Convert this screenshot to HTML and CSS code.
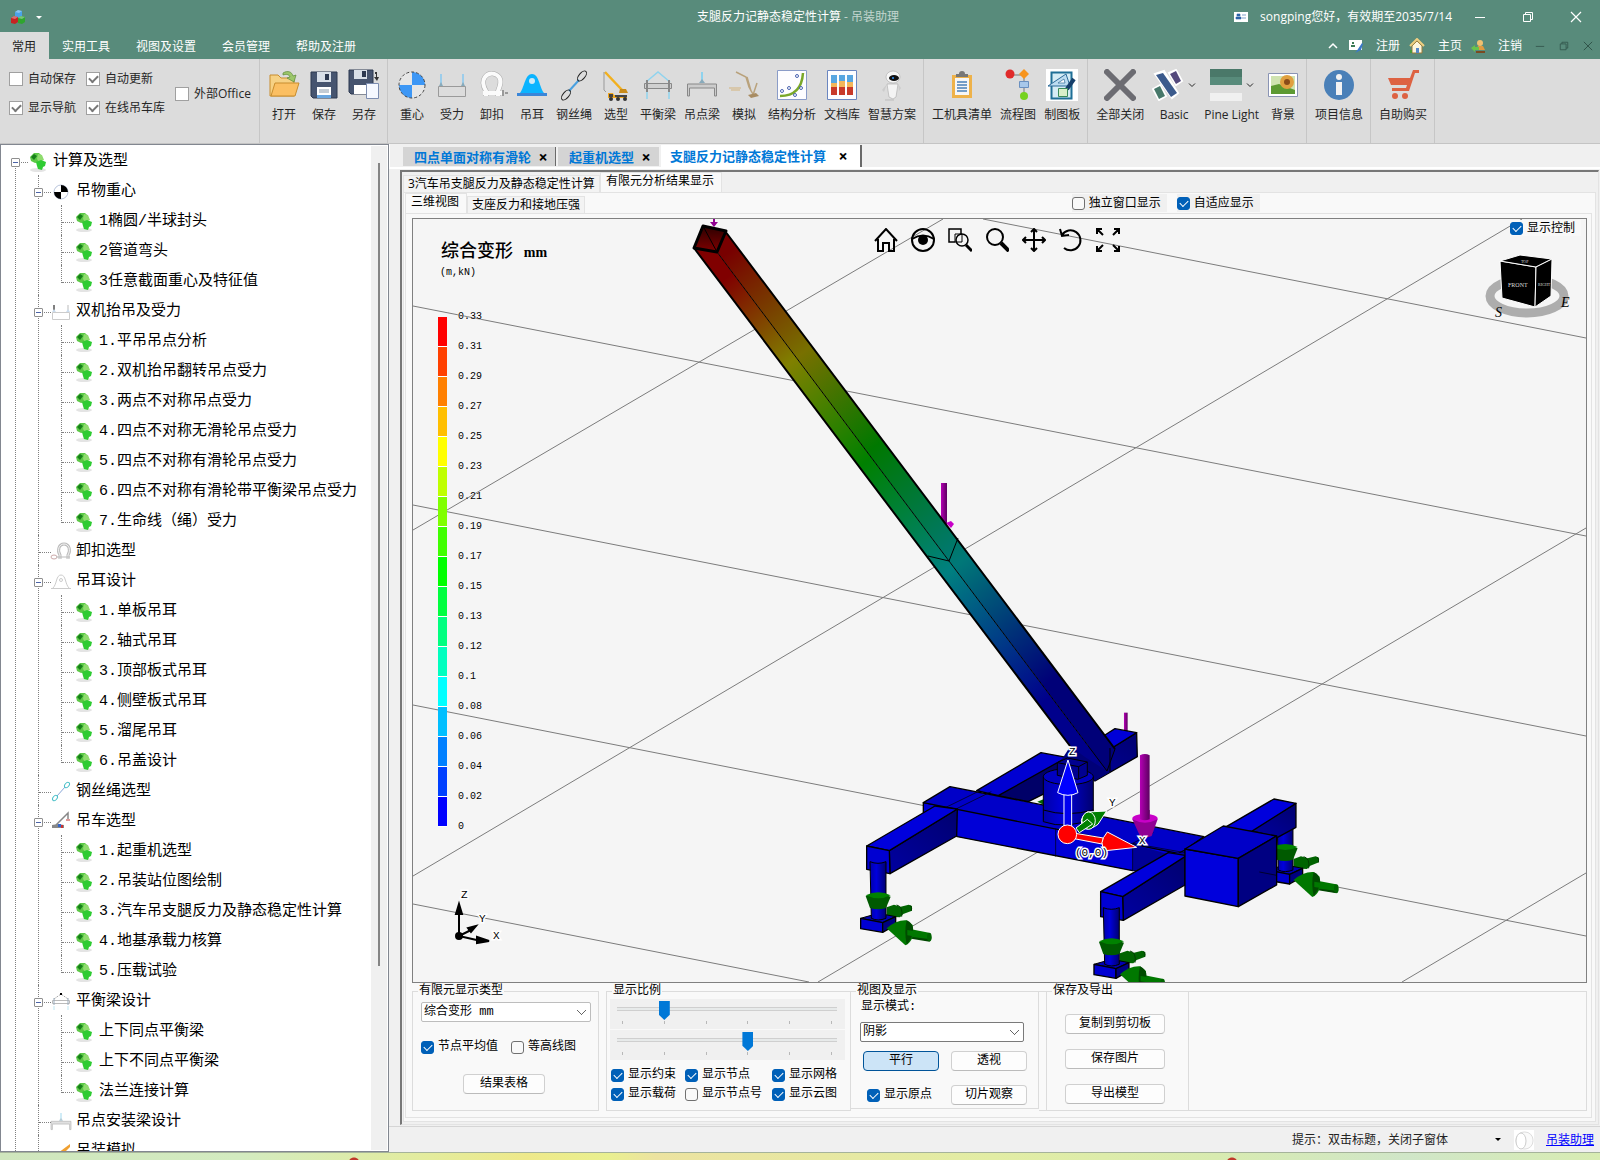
FILE: index.html
```html
<!DOCTYPE html>
<html lang="zh-CN">
<head>
    <meta charset="UTF-8">
    <title>支腿反力记静态稳定性计算 - 吊装助理</title>
    <link rel="stylesheet" href="styles.css">
</head>
<body>
    <!-- shared icons -->
    <svg class="defs" aria-hidden="true">
        <symbol id="leaf" viewBox="0 0 22 22">
            <ellipse cx="11" cy="19" rx="8" ry="2" fill="#e4e4e4"/>
            <path d="M3 6l4-4 5 0 3 3-2 6-5 1-4-2z" fill="#5cc846"/>
            <path d="M4 6l3-3 3 2-3 4z" fill="#17801a"/>
            <path d="M11 3l4 1 2 5-5 2-2-3z" fill="#8fdc6e"/>
            <path d="M9 11l5-2 5 2-1 4-2 1-1 3-4-1-1-3z" fill="#2fcb33"/>
        </symbol>
        <symbol id="beam" viewBox="0 0 32 32">
            <path d="M5 5v12M27 5v12" stroke="#86c8f0" stroke-width="1.5"/>
            <path d="M3 17l2-4 2 4zM25 17l2-4 2 4z" fill="#8ab"/>
            <path d="M2.500 17.500h27v10h-27z" fill="none" stroke="#9a9a9a"/>
        </symbol>
        <symbol id="shackle" viewBox="0 0 32 32">
            <path d="M10 27v-5c-3-5-4-10-1-14 4-5 11-4 14 0 3 4 1 9-1 14v5" fill="none" stroke="#aaa" stroke-width="5"/>
            <path d="M10 27v-5c-3-5-4-10-1-14 4-5 11-4 14 0 3 4 1 9-1 14v5M7 24h20" fill="none" stroke="#fbfbfb" stroke-width="4"/>
            <path d="M27 21v6M29 24h3" stroke="#999" stroke-width="2"/>
        </symbol>
        <symbol id="rope" viewBox="0 0 32 32">
            <path d="M11 22L21 11" stroke="#48a0e0" stroke-width="2"/>
            <ellipse cx="24" cy="7" rx="3" ry="6" transform="rotate(40 24 7)" fill="none" stroke="#222"/>
            <ellipse cx="8" cy="26" rx="3" ry="6" transform="rotate(40 8 26)" fill="none" stroke="#222"/>
        </symbol>
        <symbol id="spreader" viewBox="0 0 32 32">
            <path d="M4 13L16 3l12 10M5 21v9M27 21v9" fill="none" stroke="#8fd3ee" stroke-width="1.500"/>
            <path d="M2.500 14.500h27v5h-27z" fill="#d0d0d0" stroke="#888"/>
            <path d="M5 11v12M27 11v12" stroke="#888" stroke-width="2"/>
        </symbol>
        <symbol id="pointbeam" viewBox="0 0 32 32">
            <path d="M16 3v11" stroke="#8fd3ee" stroke-width="2"/>
            <path d="M13 14l3-4 3 4z" fill="#8ab"/>
            <path d="M1.500 27v-12h29v12h-2v-8h-25v8z" fill="#ccc" stroke="#888"/>
        </symbol>
        <symbol id="restore" viewBox="0 0 12 12">
            <path d="M1.500 3.500h7v7h-7zM3.500 3.500v-2h7v7h-2" fill="none" stroke="currentColor"/>
        </symbol>
        <symbol id="cross" viewBox="0 0 12 12">
            <path d="M1 1l10 10M11 1L1 11" stroke="currentColor" stroke-width="1.200"/>
        </symbol>
        <symbol id="dash" viewBox="0 0 12 12"><path d="M1 6.500h10" stroke="currentColor"/></symbol>
        <symbol id="down" viewBox="0 0 8 8"><path d="M1 2.500l3 3 3-3" fill="none" stroke="currentColor"/></symbol>
    </svg>

    <div class="app">
        <header class="titlebar">
            <div class="quick">
                <svg class="logo" viewBox="0 0 16 16">
                    <path d="M5 3l3-2 4 1v5l-3 2-4-1z" fill="#4aa3e8"/>
                    <path d="M1 9l3-2 4 1v5l-3 2-4-1z" fill="#c62222"/>
                    <path d="M8 9l3-2 4 1v5l-3 2-4-1z" fill="#2fa52f"/>
                    <path d="M5 3l3-2 4 1-3 2zM1 9l3-2 4 1-3 2zM8 9l3-2 4 1-3 2z" fill="#fff" opacity=".35"/>
                </svg>
                <span class="caret"></span>
            </div>
            <div class="title">支腿反力记静态稳定性计算 <span>- 吊装助理</span></div>
            <div class="account">
                <svg class="i14" viewBox="0 0 14 14"><path d="M0 2h14v10H0z" fill="#fff"/><path d="M2 9h5V7H2zM3 4h3v2H3zM8 5h4M8 8h4" fill="#2b63a8" stroke="#2b63a8" stroke-width=".6"/></svg>
                <span>songping您好，有效期至2035/7/14</span>
                <button class="win" aria-label="最小化"><svg><use href="#dash"/></svg></button>
                <button class="win" aria-label="还原"><svg><use href="#restore"/></svg></button>
                <button class="win" aria-label="关闭"><svg><use href="#cross"/></svg></button>
            </div>
        </header>

        <nav class="menubar">
            <a href="#" class="active">常用</a>
            <a href="#">实用工具</a>
            <a href="#">视图及设置</a>
            <a href="#">会员管理</a>
            <a href="#">帮助及注册</a>
            <div class="menu-right">
                <svg class="i10" viewBox="0 0 10 10"><path d="M1 7l4-4 4 4" fill="none" stroke="#fff" stroke-width="1.500"/></svg>
                <svg class="i14" viewBox="0 0 14 14"><path d="M0 1h13v10H0z" fill="#fff"/><path d="M2 8h4V6H2zM3 3h2v2H3z" fill="#3c7a55"/><path d="M13 4L7 13l-1 1 6-3 2-6z" fill="#3a78c8"/></svg>
                <a href="#">注册</a>
                <svg class="i16" viewBox="0 0 16 16"><path d="M3 8v7h10V8L8 3z" fill="#fdf6dc" stroke="#9a7a3a"/><path d="M1 8l7-7 7 7" fill="none" stroke="#f0cf80" stroke-width="2"/><path d="M7 10h3v5H7z" fill="#5588c8"/><path d="M1 12h2v3H1z" fill="#4a9a3a"/></svg>
                <a href="#">主页</a>
                <svg class="i14" viewBox="0 0 14 14"><circle cx="9" cy="4" r="3" fill="#f0c070"/><path d="M5 11h9l-2-4H7z" fill="#e09a40"/><path d="M5 12h9v2H5z" fill="#7a4a20"/><path d="M0 9l4-3v2h4v3H4v2z" fill="#6ac34a"/></svg>
                <a href="#">注销</a>
                <button class="mdi" aria-label="最小化"><svg><use href="#dash"/></svg></button>
                <button class="mdi" aria-label="还原"><svg><use href="#restore"/></svg></button>
                <button class="mdi" aria-label="关闭"><svg><use href="#cross"/></svg></button>
            </div>
        </nav>

        <div class="ribbon">
            <div class="options">
                <div class="opt-grid">
                    <label><input type="checkbox" class="flat">自动保存</label>
                    <label><input type="checkbox" class="flat" checked>自动更新</label>
                    <label><input type="checkbox" class="flat" checked>显示导航</label>
                    <label><input type="checkbox" class="flat" checked>在线吊车库</label>
                </div>
                <label><input type="checkbox" class="flat">外部Office</label>
            </div>

            <div class="group">
                <button class="tool">
                    <svg viewBox="0 0 32 32"><path d="M2 6h8l3 3h13v18H2z" fill="#f6d184" stroke="#c88d2e"/><path d="M7 14h24l-4 13H3z" fill="#fbbf62" stroke="#c88d2e"/><path d="M15 4c5-3 9-1 10 3l3-1-2 7-7-4 3-1c-1-3-4-3-7-2z" fill="#9cc66a" stroke="#5d8a3a" stroke-width=".7"/></svg>
                    打开
                </button>
                <button class="tool">
                    <svg viewBox="0 0 32 32"><path d="M3 3h26v26H5l-2-2z" fill="#46546f" stroke="#2c3850"/><path d="M9 3h14v10H9z" fill="#d8dfe8"/><path d="M17 5h4v6h-4z" fill="#2c3850"/><path d="M9 18h14v11H9z" fill="#fff"/><path d="M9 26h14v3H9z" fill="#6aa7e0"/><path d="M11 21h10M11 23h10" stroke="#89a"/></svg>
                    保存
                </button>
                <button class="tool">
                    <svg viewBox="0 0 32 32"><path d="M1 1h24v24H3l-2-2z" fill="#46546f" stroke="#2c3850"/><path d="M6 1h13v9H6z" fill="#d8dfe8"/><path d="M14 2h4v6h-4z" fill="#2c3850"/><path d="M6 16h13v9H6z" fill="#fff"/><path d="M18.500 14.500h12v15h-12z" fill="#f5f8ff" stroke="#7c8db0"/><path d="M27 3h2v5h2l-2 4-3-4h2V5h-1z" fill="#333"/></svg>
                    另存
                </button>
            </div>

            <div class="group">
                <button class="tool">
                    <svg viewBox="0 0 32 32"><circle cx="16" cy="16" r="13" fill="#e6e6e6"/><path d="M16 16V3a13 13 0 0 1 13 13zM16 16v13A13 13 0 0 1 3 16z" fill="#3d97f5"/><circle cx="16" cy="16" r="13" fill="none" stroke="#444" stroke-dasharray="3 2"/></svg>
                    重心
                </button>
                <button class="tool"><svg><use href="#beam"/></svg>受力</button>
                <button class="tool"><svg><use href="#shackle"/></svg>卸扣</button>
                <button class="tool">
                    <svg viewBox="0 0 32 32"><path d="M1 24h30v3H1z" fill="#3a86d8"/><path d="M4 24C9 17 9 5 16 5s7 12 12 19z" fill="#0bb4ff"/><circle cx="16" cy="12" r="3" fill="#cfeaf8"/></svg>
                    吊耳
                </button>
                <button class="tool"><svg><use href="#rope"/></svg>钢丝绳</button>
                <button class="tool">
                    <svg viewBox="0 0 32 32"><path d="M5 3l18 19" stroke="#f2b01e" stroke-width="2.500"/><path d="M4 3v18l2 2" fill="none" stroke="#999"/><path d="M8 24h5l1 2h13v3H8z" fill="#f2a81e"/><path d="M9 25h4v3H9zM15 26h12v2H15z" fill="#444"/><path d="M20 20h6l2 4h-9z" fill="#c98b1a"/><circle cx="11" cy="30" r="2" fill="#333"/><circle cx="18" cy="30" r="2" fill="#333"/><circle cx="25" cy="30" r="2" fill="#333"/></svg>
                    选型
                </button>
                <button class="tool"><svg><use href="#spreader"/></svg>平衡梁</button>
                <button class="tool"><svg><use href="#pointbeam"/></svg>吊点梁</button>
                <button class="tool">
                    <svg viewBox="0 0 32 32"><path d="M8 3l10 5 3 10 5 9M29 14l-4 12M19 8l4 14" fill="none" stroke="#b9a27c" stroke-width="1.500"/><path d="M1 19h12M3 21h9" stroke="#d3b37c"/><path d="M20 26l8-2 3 3-8 2z" fill="#a88c62"/></svg>
                    模拟
                </button>
                <button class="tool">
                    <svg viewBox="0 0 32 32"><path d="M1.500 1.500h29v29h-29z" fill="#fdfdff" stroke="#8a9cc8"/><path d="M4 27c14 0 22-8 23-23" fill="none" stroke="#7aa82a" stroke-width="2.500"/><g fill="none" stroke="#4a64b0"><circle cx="21" cy="7" r="1.500"/><circle cx="6" cy="22" r="1.500"/><circle cx="13" cy="19" r="1.500"/><circle cx="25" cy="19" r="1.500"/><circle cx="19" cy="26" r="1.500"/></g></svg>
                    结构分析
                </button>
                <button class="tool">
                    <svg viewBox="0 0 32 32"><path d="M1.500 1.500h29v29h-29z" fill="#fdfdff" stroke="#6a86c0"/><path d="M5 6h6v20H5zM13 6h6v20h-6zM21 6h6v20h-6z" fill="#c83a2a"/><path d="M5 6h6v8H5zM13 6h6v6h-6zM21 6h6v7h-6z" fill="#58a6e0"/><path d="M5 14h6v4H5zM13 12h6v6h-6zM21 13h6v5h-6z" fill="#f3b65a"/></svg>
                    文档库
                </button>
                <button class="tool">
                    <svg viewBox="0 0 32 32"><ellipse cx="17" cy="8" rx="7" ry="6" fill="#f6f6f6" stroke="#aaa" stroke-width=".6"/><ellipse cx="18" cy="9" rx="5" ry="3" fill="#111"/><circle cx="17" cy="9" r="1" fill="#39f"/><path d="M11 15h11l-2 13-3 2-4-2z" fill="#f4f4f4" stroke="#aaa" stroke-width=".6"/><path d="M11 15l-5 6 2 2zM22 15l3 4-2 3z" fill="#ccc"/><path d="M9 31h9" stroke="#bbb"/></svg>
                    智慧方案
                </button>
            </div>

            <div class="group">
                <button class="tool">
                    <svg viewBox="0 0 32 32"><path d="M6 6h20v23H6z" fill="#eeb24a"/><path d="M9 9h14v17H9z" fill="#f6f6f6"/><path d="M10 8V5h3a3 3 0 0 1 6 0h3v3z" fill="#777"/><path d="M11 13h10M11 16h10M11 19h10M11 22h10" stroke="#4a80b8" stroke-width="1.500"/></svg>
                    工机具清单
                </button>
                <button class="tool">
                    <svg viewBox="0 0 32 32"><path d="M7 6h14M22 8v20" stroke="#999" stroke-width="1.500"/><circle cx="8" cy="5" r="4.500" fill="#e02a2a"/><path d="M22 0l5 5-5 5-5-5z" fill="#f7941d"/><path d="M17.500 12.500h9v6h-9z" fill="#a8c8ea" stroke="#6a90c0"/><circle cx="22" cy="27" r="4" fill="#76d21f"/></svg>
                    流程图
                </button>
                <button class="tool">
                    <svg viewBox="0 0 32 32"><path d="M0 0h32v32H0z" fill="#fff"/><path d="M5.500 3.500h20v26h-20z" fill="#d5ecf5" stroke="#1f6f96" stroke-width="2"/><path d="M2 17L20 5l4 12z" fill="#bcdcf0" stroke="#2b6a98"/><path d="M12 14l6-4 1 4z" fill="#fff" stroke="#2b6a98" stroke-width=".7"/><path d="M21 20l7-10" stroke="#163f6a" stroke-width="4"/><path d="M12.500 19.500h9v8h-9z" fill="#d9efc9" stroke="#3a8a5a"/></svg>
                    制图板
                </button>
            </div>

            <div class="group">
                <button class="tool">
                    <svg viewBox="0 0 32 32"><path d="M3 3l26 26M29 3L3 29" stroke="#6c6c72" stroke-width="6" stroke-linecap="round"/></svg>
                    全部关闭
                </button>
                <button class="tool">
                    <span class="with-arrow">
                        <svg viewBox="0 0 32 32"><path d="M3 5l9-3 14 22-6 5zM1 20l7-4 6 11-7 4zM17 4l7-3 6 11-6 4z" fill="#fff" stroke="#fff" stroke-width="2"/><path d="M4 6l7-2 14 20-6 4z" fill="#3b5a8c"/><path d="M2 20l6-3 5 10-6 3z" fill="#47786a"/><path d="M18 5l6-3 5 10-5 3z" fill="#54497c"/></svg>
                        <svg class="arrow"><use href="#down"/></svg>
                    </span>
                    Basic
                </button>
                <button class="tool">
                    <span class="with-arrow">
                        <svg viewBox="0 0 32 32"><path d="M0 0h32v8H0z" fill="#4a7869"/><path d="M0 8h32v8H0z" fill="#588b7b"/><path d="M0 24h32v8H0z" fill="#f0f0f0"/></svg>
                        <svg class="arrow"><use href="#down"/></svg>
                    </span>
                    Pine Light
                </button>
                <button class="tool">
                    <svg viewBox="0 0 32 32"><path d="M1.500 4.500h29v23h-29z" fill="#fff" stroke="#8a94b4"/><path d="M4 7h24v18H4z" fill="#cfe3b0"/><path d="M4 17l8-2 16 6v4H4z" fill="#5d9a32"/><circle cx="20" cy="13" r="7" fill="#e0a040"/><circle cx="20" cy="13" r="3" fill="#8a4a18"/></svg>
                    背景
                </button>
            </div>

            <div class="group">
                <button class="tool">
                    <svg viewBox="0 0 32 32"><circle cx="16" cy="16" r="15" fill="#4a80b8"/><circle cx="16" cy="8" r="3" fill="#f2f2f2"/><path d="M13 13h6v13h-6z" fill="#f2f2f2"/></svg>
                    项目信息
                </button>
            </div>

            <div class="group">
                <button class="tool">
                    <svg viewBox="0 0 32 32"><path d="M1 9h22l3-8h6v3h-4l-6 18H5v-3h14l1-3H4z" fill="#dd6242"/><circle cx="8" cy="27" r="3" fill="#dd6242"/><circle cx="18" cy="27" r="3" fill="#dd6242"/></svg>
                    自助购买
                </button>
            </div>
        </div>

        <div class="workspace">
            <aside class="sidebar">
                <ul class="tree">
                    <li class="root">
                        <button class="exp" aria-label="折叠"></button>
                        <span class="node"><svg><use href="#leaf"/></svg>计算及选型</span>
                        <ul>
                            <li>
                                <button class="exp" aria-label="折叠"></button>
                                <span class="node"><svg viewBox="0 0 22 22"><circle cx="11" cy="11" r="7" fill="#fff" stroke="#9ac" stroke-width=".7"/><path d="M11 11V4a7 7 0 0 1 7 7zM11 11v7a7 7 0 0 1-7-7z"/></svg>吊物重心</span>
                                <ul>
                                    <li><span class="node"><svg><use href="#leaf"/></svg>1椭圆/半球封头</span></li>
                                    <li><span class="node"><svg><use href="#leaf"/></svg>2管道弯头</span></li>
                                    <li><span class="node"><svg><use href="#leaf"/></svg>3任意截面重心及特征值</span></li>
                                </ul>
                            </li>
                            <li>
                                <button class="exp" aria-label="折叠"></button>
                                <span class="node"><svg viewBox="0 0 22 22"><path d="M4 4v6" stroke="#000"/><path d="M18 4v6" stroke="#ddd" stroke-width="2"/><path d="M2 11l2-3 2 3zM16 11l2-3 2 3z" fill="#cde"/><path d="M2.500 11.500h17v7h-17z" fill="none" stroke="#ccc"/></svg>双机抬吊及受力</span>
                                <ul>
                                    <li><span class="node"><svg><use href="#leaf"/></svg>1.平吊吊点分析</span></li>
                                    <li><span class="node"><svg><use href="#leaf"/></svg>2.双机抬吊翻转吊点受力</span></li>
                                    <li><span class="node"><svg><use href="#leaf"/></svg>3.两点不对称吊点受力</span></li>
                                    <li><span class="node"><svg><use href="#leaf"/></svg>4.四点不对称无滑轮吊点受力</span></li>
                                    <li><span class="node"><svg><use href="#leaf"/></svg>5.四点不对称有滑轮吊点受力</span></li>
                                    <li><span class="node"><svg><use href="#leaf"/></svg>6.四点不对称有滑轮带平衡梁吊点受力</span></li>
                                    <li><span class="node"><svg><use href="#leaf"/></svg>7.生命线（绳）受力</span></li>
                                </ul>
                            </li>
                            <li><span class="node"><svg viewBox="0 0 22 22"><path d="M10 18v-4c-3-5-1-11 4-11s7 6 4 11v4" fill="none" stroke="#bbb" stroke-width="3"/><path d="M10 18v-4c-3-5-1-11 4-11s7 6 4 11v4" fill="none" stroke="#f6f6f6"/><ellipse cx="4" cy="16" rx="3" ry="2" fill="none" stroke="#caa"/><path d="M6 16h14" stroke="#bbb"/></svg>卸扣选型</span></li>
                            <li>
                                <button class="exp" aria-label="折叠"></button>
                                <span class="node"><svg viewBox="0 0 22 22"><path d="M1 17.500h20M3 17C7 13 6 4 11 4s4 9 8 13" fill="none" stroke="#ccc"/><circle cx="11" cy="9" r="1.500" fill="none" stroke="#ccc"/></svg>吊耳设计</span>
                                <ul>
                                    <li><span class="node"><svg><use href="#leaf"/></svg>1.单板吊耳</span></li>
                                    <li><span class="node"><svg><use href="#leaf"/></svg>2.轴式吊耳</span></li>
                                    <li><span class="node"><svg><use href="#leaf"/></svg>3.顶部板式吊耳</span></li>
                                    <li><span class="node"><svg><use href="#leaf"/></svg>4.侧壁板式吊耳</span></li>
                                    <li><span class="node"><svg><use href="#leaf"/></svg>5.溜尾吊耳</span></li>
                                    <li><span class="node"><svg><use href="#leaf"/></svg>6.吊盖设计</span></li>
                                </ul>
                            </li>
                            <li><span class="node"><svg viewBox="0 0 22 22"><path d="M7 15l8-9" stroke="#8aa8d8"/><ellipse cx="17" cy="4" rx="2" ry="3" transform="rotate(40 17 4)" fill="none" stroke="#4ac0c8"/><ellipse cx="5" cy="17" rx="2" ry="3" transform="rotate(40 5 17)" fill="none" stroke="#4ac0c8"/></svg>钢丝绳选型</span></li>
                            <li>
                                <button class="exp" aria-label="折叠"></button>
                                <span class="node"><svg viewBox="0 0 22 22"><path d="M6 14L18 2v6" fill="none" stroke="#888" stroke-width="1.500"/><path d="M2 14l6-1 6 1v3H2z" fill="#888"/><path d="M16 8h4v2h-4z" fill="#d99"/><path d="M8 13h3v3H8z" fill="#36c"/><path d="M11 14h2v3h-2z" fill="#c33"/></svg>吊车选型</span>
                                <ul>
                                    <li><span class="node"><svg><use href="#leaf"/></svg>1.起重机选型</span></li>
                                    <li><span class="node"><svg><use href="#leaf"/></svg>2.吊装站位图绘制</span></li>
                                    <li><span class="node"><svg><use href="#leaf"/></svg>3.汽车吊支腿反力及静态稳定性计算</span></li>
                                    <li><span class="node"><svg><use href="#leaf"/></svg>4.地基承载力核算</span></li>
                                    <li><span class="node"><svg><use href="#leaf"/></svg>5.压载试验</span></li>
                                </ul>
                            </li>
                            <li>
                                <button class="exp" aria-label="折叠"></button>
                                <span class="node"><svg viewBox="0 0 22 22"><path d="M4 8l7-5 7 5" fill="none" stroke="#aaa" stroke-dasharray="2 1"/><path d="M10 2h2v2h-2z"/><path d="M2.500 9.500h17v3h-17z" fill="#fff" stroke="#bbb"/><path d="M4 7v7M18 7v7" stroke="#9ab"/><path d="M4 15v4M18 15v4" stroke="#bfe6f2"/></svg>平衡梁设计</span>
                                <ul>
                                    <li><span class="node"><svg><use href="#leaf"/></svg>上下同点平衡梁</span></li>
                                    <li><span class="node"><svg><use href="#leaf"/></svg>上下不同点平衡梁</span></li>
                                    <li><span class="node"><svg><use href="#leaf"/></svg>法兰连接计算</span></li>
                                </ul>
                            </li>
                            <li><span class="node"><svg class="pale"><use href="#pointbeam"/></svg>吊点安装梁设计</span></li>
                            <li class="more"><span class="node"><svg viewBox="0 0 22 22"><path d="M8 12L20 3v3L10 16z" fill="#f0a030"/></svg>吊装模拟</span></li>
                        </ul>
                    </li>
                </ul>
                <div class="scrollbar"><div class="thumb"></div></div>
            </aside>

            <main class="content">
                <div class="doc-tabs">
                    <div class="doc-tab">四点单面对称有滑轮<button aria-label="关闭">×</button></div>
                    <div class="doc-tab">起重机选型<button aria-label="关闭">×</button></div>
                    <div class="doc-tab current">支腿反力记静态稳定性计算<button aria-label="关闭">×</button></div>
                </div>

                <div class="frame">
                    <div class="tabs">
                        <button class="tab">3汽车吊支腿反力及静态稳定性计算</button>
                        <button class="tab selected">有限元分析结果显示</button>
                    </div>
                    <div class="page outer">
                        <div class="tabs">
                            <button class="tab selected">三维视图</button>
                            <button class="tab">支座反力和接地压强</button>
                            <div class="view-opts">
                                <label class="shaded"><input type="checkbox" class="tick">独立窗口显示</label>
                                <label class="shaded"><input type="checkbox" class="tick" checked>自适应显示</label>
                            </div>
                        </div>
                        <div class="page inner">
                            <div class="canvas">
                                <svg class="scene" viewBox="413 219 1173 763" preserveAspectRatio="xMidYMid slice">
                                    <defs>
                                        <linearGradient id="boomL" gradientUnits="userSpaceOnUse" x1="705" y1="255" x2="1090" y2="745">
                                            <stop offset=".05" stop-color="#800000"/>
                                            <stop offset=".22" stop-color="#808000"/>
                                            <stop offset=".42" stop-color="#008000"/>
                                            <stop offset=".64" stop-color="#008080"/>
                                            <stop offset=".9" stop-color="#00008c"/>
                                        </linearGradient>
                                        <linearGradient id="boomR" gradientUnits="userSpaceOnUse" x1="705" y1="255" x2="1090" y2="745">
                                            <stop offset=".02" stop-color="#780000"/>
                                            <stop offset=".22" stop-color="#787000"/>
                                            <stop offset=".41" stop-color="#007800"/>
                                            <stop offset=".64" stop-color="#007878"/>
                                            <stop offset=".88" stop-color="#000078"/>
                                        </linearGradient>
                                        <linearGradient id="mouth" x1="0" y1="0" x2="0" y2="1">
                                            <stop offset="0" stop-color="#2c0000"/>
                                            <stop offset="1" stop-color="#800000"/>
                                        </linearGradient>
                                        <linearGradient id="side" x1="0" y1="1" x2="1" y2="0">
                                            <stop offset="0" stop-color="#0000a0"/>
                                            <stop offset="1" stop-color="#000070"/>
                                        </linearGradient>
                                        <linearGradient id="round">
                                            <stop offset="0" stop-color="#0000a8"/>
                                            <stop offset=".4" stop-color="#0000dc"/>
                                            <stop offset="1" stop-color="#000070"/>
                                        </linearGradient>
                                        <linearGradient id="load">
                                            <stop offset="0" stop-color="#b400b4"/>
                                            <stop offset="1" stop-color="#5c0060"/>
                                        </linearGradient>
                                        <!-- outrigger leg with its restraint arrows -->
                                        <g id="leg">
                                            <path d="M110 622l22-8 20 6 24-6 10 4v14l-26 10-10 10-40-2z" fill="#006400"/>
                                            <path d="M140 615q20 5 15 35M180 616q8 8 4 16" fill="none" stroke="#003c00" stroke-width="3"/>
                                            <path d="M32 655l53-15 52 10-39 18z" fill="#0000b4" stroke="#000" stroke-width="3"/>
                                            <path d="M32 655l66 13v29l-66-11z" fill="#0000d2" stroke="#000" stroke-width="4"/>
                                            <path d="M98 668l39-18v25l-39 22z" fill="#000080" stroke="#000" stroke-width="4"/>
                                            <path d="M60 485q24 10 48 0v170q-24 10-44 0z" fill="url(#round)" stroke="#000" stroke-width="3"/>
                                            <path d="M47 588q38-14 75 2l-14 34q-24 8-48 0z" fill="#005a00"/>
                                            <path d="M47 586q38-18 75 0q-36 18-75 0z" fill="#008200"/>
                                            <path d="M165 684l72 14q12 12 4 26l-76-14z" fill="#007800"/>
                                            <path d="M165 708l76 10-2 7-74-12z" fill="#004600"/>
                                            <path d="M110 685q30-26 60-24l18 14v36q-8 20-22 25z" fill="#007800"/>
                                            <path d="M170 661q30 14 14 52l-14 21q-8-40 0-73z" fill="#004b00"/>
                                            <path d="M172 690l20 3v16l-20-3z" fill="#007800"/>
                                            <ellipse cx="238" cy="711" rx="7" ry="13" fill="#006400"/>
                                        </g>
                                    </defs>

                                    <g class="grid">
                                        <path d="M983 219L1586 338M413 306L1586 536M413 505L1586 736M413 705L1586 936M413 904L809 982"/>
                                        <path d="M413 530L943 219M413 876L1522 219M818 982L1586 528M1402 982L1586 873"/>
                                    </g>

                                    <rect x="941" y="483" width="6" height="42" fill="url(#load)"/>
                                    <path d="M946 523l5-2 3 3-3 4z" fill="#c800c8"/>
                                    <path d="M714 219v5" stroke="#900090" stroke-width="2"/>
                                    <path d="M710 222h8l-4 5z" fill="#900090"/>

                                    <!-- truck body, drawn on a three times finer grid -->
                                    <g transform="translate(850 700) scale(.3333)" stroke-linejoin="round">
                                        <rect x="822" y="38" width="11" height="60" fill="url(#load)"/>
                                        <path d="M562 305l20-8v18z" fill="#006400"/>
                                        <g stroke="#000" stroke-width="4">
                                            <path d="M860 98l2 72-127 73-60-50 106-46z" fill="url(#side)"/>
                                            <path d="M765 105l30-19 65 12-79 49-50 10z" fill="#0000d8"/>
                                            <path d="M380 272l193-114 77 14v24l-200 92z" fill="#0000d2"/>
                                            <path d="M640 178l-195 109 90 18 60-30z" fill="#000068"/>
                                            <path d="M220 308v34l102 68 526 102 157-22v-40L220 308z" fill="#0000d7"/>
                                            <path d="M220 308l80-48 762 150-57 40-20 10z" fill="#0000c8"/>
                                        </g>
                                        <path d="M636 178l24-38 120 5 2 70-47 27-85-42z" fill="#000078"/>
                                        <path d="M848 432v80l157-28v-26l-60 2z" fill="#000096"/>
                                        <path d="M288 322l102-50M322 325l102-50M617 385v85M848 432v80M1005 458L848 430l62-32" fill="none" stroke="#000" stroke-width="2"/>
                                        <g stroke="#000" stroke-width="4">
                                            <path d="M118 452l204-125-2 81-200 113z" fill="url(#side)"/>
                                            <path d="M50 438l205-120 67 9-204 125z" fill="#0000dc"/>
                                            <path d="M50 438l68 14 2 69-70-13z" fill="#0000d2"/>
                                        </g>
                                        <use href="#leg"/>

                                        <g stroke="#000" stroke-width="3">
                                            <path d="M580 230v135q70 25 150-10V230z" fill="url(#round)"/>
                                            <ellipse cx="655" cy="230" rx="75" ry="24" fill="#0000c0"/>
                                            <path d="M580 330q70 22 150 0" fill="none"/>
                                            <path d="M622 188l30-14 60 12v40l-28 12-62-12z" fill="#000090"/>
                                            <path d="M622 188l64 12 26-14M686 200v36" fill="none"/>
                                        </g>

                                        <use href="#leg" x="1221" y="-145"/>
                                        <g stroke="#000" stroke-width="4">
                                            <path d="M1338 310v72l-55 30-80-20z" fill="url(#side)"/>
                                            <path d="M1120 385l152-88 66 13-133 84z" fill="#0000dc"/>
                                            <path d="M818 590l187-122v87l-185 106z" fill="url(#side)"/>
                                            <path d="M752 575l203-117 50 8v4L818 590z" fill="#0000dc"/>
                                            <path d="M752 575l66 15 2 71-68-11z" fill="#0000d2"/>
                                            <path d="M1005 447l160 28v145l-160-32z" fill="#0000dc"/>
                                            <path d="M1005 447l115-69 160 30-115 67z" fill="#0000c8"/>
                                            <path d="M1165 475l115-67v147l-115 65z" fill="#000082"/>
                                        </g>
                                        <path d="M1228 516l52 10" stroke="#000" stroke-width="2"/>
                                        <use href="#leg" x="700" y="138"/>
                                    </g>

                                    <!-- boom -->
                                    <g stroke="#000" stroke-linejoin="round">
                                        <path d="M694 248L717 252 949 561 1107 771 1085 757 1070 746z" fill="url(#boomL)" stroke="none"/>
                                        <path d="M717 252L725 231 1115 749 1107 771 949 561z" fill="url(#boomR)" stroke="none"/>
                                        <path d="M717 252L949 561 1107 771" fill="none"/>
                                        <path d="M694 248L1070 746M725 231L1115 749" stroke-width="2"/>
                                        <path d="M928 556l21 5 9-23M1115 749l-8 22" fill="none"/>
                                        <path d="M703 226l23 5-9 21-23-4z" fill="url(#mouth)" stroke-width="3"/>
                                        <path d="M703 226l14 26" fill="none"/>
                                        <path d="M1110 748v24" fill="none"/>
                                    </g>

                                    <g transform="translate(850 700) scale(.3333)" stroke-linejoin="round">
                                        <path d="M870 166q15-8 29 0v190h-29z" fill="url(#load)"/>
                                        <ellipse cx="885" cy="356" rx="38" ry="14" fill="#c800c8"/>
                                        <path d="M847 358q38 20 76 0l-18 50q-20 8-36-2z" fill="#900094"/>
                                        <path d="M870 330h29v28q-15 6-29 0z" fill="url(#load)"/>
                                        <g stroke="#fff" stroke-width="3">
                                            <path d="M642 280h23v110h-23z" fill="#0000f0"/>
                                            <path d="M654 180l30 98q-30 16-61 0z" fill="#0000ff"/>
                                            <path d="M712 336l58-3-26 40q-24 18-40 13-24-26 8-50z" fill="#008000"/>
                                            <ellipse cx="716" cy="362" rx="20" ry="26" fill="#008000"/>
                                            <path d="M678 384l34-26 16 14-40 26z" fill="#008000"/>
                                            <path d="M676 400l84 14-4 18-84-16z" fill="#f00"/>
                                            <path d="M772 396l88 46-92 10q-26-20 4-56z" fill="#f00"/>
                                        </g>
                                        <circle cx="652" cy="403" r="28" fill="#f00" stroke="#fff" stroke-width="3"/>
                                    </g>
                                    <g class="axis">
                                        <text x="1069" y="755">Z</text>
                                        <text x="1109" y="806">Y</text>
                                        <text x="1139" y="844">X</text>
                                        <text x="1075" y="856">(0,0)</text>
                                    </g>

                                    <!-- corner triad -->
                                    <g stroke="#000" stroke-width="2">
                                        <path d="M459 936v-26M459 936l22 5M459 936l14-7" fill="none"/>
                                        <path d="M459 904l3 10h-6zM489 941l-12-4v6zM476 926l-8 2 3 4z"/>
                                        <circle cx="459" cy="936" r="3"/>
                                    </g>
                                    <g class="axis">
                                        <text x="461" y="898">Z</text>
                                        <text x="479" y="922">Y</text>
                                        <text x="493" y="939">X</text>
                                    </g>

                                    <!-- view cube -->
                                    <ellipse cx="1527" cy="296" rx="37" ry="17" fill="none" stroke="#adadad" stroke-width="9"/>
                                    <g stroke="#fff" stroke-linejoin="round">
                                        <path d="M1500 261l36 6-1 40-33-9z"/>
                                        <path d="M1500 261l20-6 32 4-16 8z"/>
                                        <path d="M1536 267l16-8-1 37-16 11z"/>
                                    </g>
                                    <g class="cube-text">
                                        <text x="1508" y="287">FRONT</text>
                                        <text x="1538" y="286" class="narrow">RIGHT</text>
                                        <text x="1521" y="263" class="narrow">TOP</text>
                                    </g>
                                    <g class="compass">
                                        <text x="1495" y="317">S</text>
                                        <text x="1561" y="307">E</text>
                                    </g>
                                </svg>

                                <div class="legend">
                                    <h2>综合变形 <b>mm</b></h2>
                                    <p>(m,kN)</p>
                                    <div class="scale">
                                        <ul class="colors">
                                            <li class="c1"></li><li class="c2"></li><li class="c3"></li><li class="c4"></li>
                                            <li class="c5"></li><li class="c6"></li><li class="c7"></li><li class="c8"></li>
                                            <li class="c9"></li><li class="c10"></li><li class="c11"></li><li class="c12"></li>
                                            <li class="c13"></li><li class="c14"></li><li class="c15"></li><li class="c16"></li>
                                            <li class="c17"></li>
                                        </ul>
                                        <ul class="values">
                                            <li>0.33</li><li>0.31</li><li>0.29</li><li>0.27</li><li>0.25</li><li>0.23</li>
                                            <li>0.21</li><li>0.19</li><li>0.17</li><li>0.15</li><li>0.13</li><li>0.12</li>
                                            <li>0.1</li><li>0.08</li><li>0.06</li><li>0.04</li><li>0.02</li><li>0</li>
                                        </ul>
                                    </div>
                                </div>

                                <div class="view-tools">
                                    <button aria-label="主视图"><svg viewBox="0 0 24 24"><path d="M1 13L12 1l11 12M4 11v12h5v-8h6v8h5V11"/></svg></button>
                                    <button aria-label="可见性"><svg viewBox="0 0 24 24"><circle cx="12" cy="12" r="11"/><path d="M1 11q11-7 22 0"/><circle cx="12" cy="12" r="5" fill="#000" stroke="none"/></svg></button>
                                    <button aria-label="窗口缩放"><svg viewBox="0 0 24 24"><path d="M7 14H1V1h12v5" stroke-width="1.500"/><path d="M7 6h7v8H7z" stroke-width="1"/><circle cx="14" cy="12" r="6" stroke-width="1.500"/><path d="M18 17l6 6" stroke-width="3"/></svg></button>
                                    <button aria-label="缩放"><svg viewBox="0 0 24 24"><circle cx="10" cy="9" r="8"/><path d="M16 15l8 8" stroke-width="4"/></svg></button>
                                    <button aria-label="平移"><svg viewBox="0 0 24 24"><path d="M12 1v22M1 12h22M9 4l3-3 3 3M9 20l3 3 3-3M4 9l-3 3 3 3M20 9l3 3-3 3"/></svg></button>
                                    <button aria-label="旋转"><svg viewBox="0 0 24 24"><path d="M3 7A10 10 0 1 1 5 20M1 1l2 7 7-1"/></svg></button>
                                    <button aria-label="全屏"><svg viewBox="0 0 24 24"><path d="M1 6V1h5M1 1l6 6M18 1h5v5M23 1l-6 6M1 18v5h5M1 23l6-6M18 23h5v-5M23 23l-6-6"/></svg></button>
                                </div>

                                <label class="show-control"><input type="checkbox" class="tick" checked>显示控制</label>
                            </div>

                            <div class="panels">
                                <fieldset class="p-type">
                                    <legend>有限元显示类型</legend>
                                    <select aria-label="有限元显示类型"><option>综合变形 mm</option></select>
                                    <div class="checks">
                                        <label><input type="checkbox" class="tick" checked>节点平均值</label>
                                        <label><input type="checkbox" class="tick">等高线图</label>
                                    </div>
                                    <button class="btn">结果表格</button>
                                </fieldset>

                                <fieldset class="p-ratio">
                                    <legend>显示比例</legend>
                                    <div class="slider">
                                        <input type="range" min="0" max="5" value="1" aria-label="变形比例">
                                        <div class="marks"><i></i><i></i><i></i><i></i><i></i><i></i></div>
                                    </div>
                                    <div class="slider">
                                        <input type="range" min="0" max="5" value="3" aria-label="符号比例">
                                        <div class="marks"><i></i><i></i><i></i><i></i><i></i><i></i></div>
                                    </div>
                                    <div class="check-grid">
                                        <label><input type="checkbox" class="tick" checked>显示约束</label>
                                        <label><input type="checkbox" class="tick" checked>显示节点</label>
                                        <label><input type="checkbox" class="tick" checked>显示网格</label>
                                        <label><input type="checkbox" class="tick" checked>显示载荷</label>
                                        <label><input type="checkbox" class="tick">显示节点号</label>
                                        <label><input type="checkbox" class="tick" checked>显示云图</label>
                                    </div>
                                </fieldset>

                                <fieldset class="p-view">
                                    <legend>视图及显示</legend>
                                    <label for="mode">显示模式:</label>
                                    <select id="mode"><option>阴影</option></select>
                                    <div class="view-grid">
                                        <button class="btn on">平行</button>
                                        <button class="btn">透视</button>
                                        <label><input type="checkbox" class="tick" checked>显示原点</label>
                                        <button class="btn">切片观察</button>
                                    </div>
                                </fieldset>

                                <div class="filler gap"></div>

                                <fieldset class="p-save">
                                    <legend>保存及导出</legend>
                                    <button class="btn">复制到剪切板</button>
                                    <button class="btn">保存图片</button>
                                    <button class="btn">导出模型</button>
                                </fieldset>

                                <div class="filler rest"></div>
                            </div>
                        </div>
                    </div>
                </div>

                <footer class="statusbar">
                    <span class="hint">提示：双击标题，关闭子窗体</span>
                    <span class="caret dark"></span>
                    <svg class="toggle" viewBox="0 0 20 20"><path d="M0 0h20v20H0z" fill="#fff"/><rect x="2" y="2" width="17" height="17" rx="8" fill="#fafafa" stroke="#ddd"/><ellipse cx="7" cy="11" rx="5" ry="8" fill="#fff" stroke="#ccc"/></svg>
                    <a href="#">吊装助理</a>
                </footer>
            </main>
        </div>

        <div class="desktop"></div>
    </div>
</body>
</html>
```
FILE: styles.css
```css
:root {
    --pine: #588b7b;
    --ribbon: #dcdcdc;
    --face: #f0f0f0;
    --page: #f9f9f9;
    --line: #dcdcdc;
    --blue: #0078d7;
    --tick: #0060b8;
}

* {
    box-sizing: border-box;
}

body {
    margin: 0;
    font-family: "Open Sans", "Noto Sans CJK SC", sans-serif;
    font-size: 12px;
    line-height: 16px;
    color: #000;
}

button, select, input {
    font: inherit;
    color: inherit;
    margin: 0;
}

button {
    padding: 0;
    border: none;
    background: none;
    white-space: nowrap;
}

ul {
    list-style: none;
    margin: 0;
    padding: 0;
}

label {
    display: flex;
    align-items: center;
    white-space: nowrap;
}

.defs {
    display: none;
}

.app {
    height: 100vh;
    display: flex;
    flex-direction: column;
    background: var(--face);
    overflow: hidden;
}

/* title bar */
.titlebar {
    flex: none;
    height: 32px;
    padding-top: 2px;
    display: grid;
    grid-template-columns: 1fr auto 1fr;
    align-items: center;
    background: var(--pine);
    color: #fff;
}

.title {
    padding-right: 4px;
}

.title span {
    color: #c3d6cf;
}

.quick {
    display: flex;
    align-items: center;
    gap: 10px;
    padding-left: 10px;
}

.logo, .i16 {
    width: 16px;
    height: 16px;
}

.i14 {
    width: 14px;
    height: 14px;
}

.i10 {
    width: 10px;
    height: 10px;
}

.caret {
    border: 3px solid transparent;
    border-top-color: #fff;
    border-bottom: none;
}

.caret.dark {
    border-top-color: #000;
}

.account {
    display: flex;
    align-items: center;
    justify-content: flex-end;
}

.account > span {
    margin: 0 4px 0 12px;
}

.win {
    width: 48px;
    height: 30px;
}

.win svg {
    display: block;
    width: 12px;
    height: 12px;
    margin: auto;
}

/* menu */
.menubar {
    flex: none;
    height: 27px;
    display: flex;
    background: var(--pine);
}

.menubar a {
    color: #fff;
    text-decoration: none;
    line-height: 30px;
}

.menubar > a {
    padding: 0 13px;
}

.menubar > a.active {
    padding: 0 13px 0 12px;
    background: var(--ribbon);
    color: #222;
}

.menu-right {
    display: flex;
    align-items: center;
    margin-left: auto;
}

.menu-right .i10 {
    margin-right: 11px;
}

.menu-right a {
    margin: 0 9px 0 13px;
}

.menu-right a:last-of-type {
    margin-right: 6px;
}

.mdi {
    width: 24px;
    height: 24px;
    color: #31544a;
}

.mdi svg {
    display: block;
    width: 10px;
    height: 10px;
    margin: auto;
}

/* ribbon */
.ribbon {
    flex: none;
    height: 85px;
    display: flex;
    background: var(--ribbon);
    border-bottom: 1px solid #c4c4c4;
    color: #262626;
}

.options {
    width: 260px;
    display: flex;
    padding: 7px 0 22px 9px;
    border-right: 1px solid #c6c6c6;
}

.opt-grid {
    display: grid;
    grid-template-columns: 77px 89px;
    align-content: space-evenly;
    row-gap: 8px;
}

.flat {
    appearance: none;
    width: 14px;
    height: 14px;
    margin-right: 5px;
    background: #fff;
    border: 1px solid #a0a0a0;
}

.flat:checked::before {
    content: "";
    display: block;
    width: 7px;
    height: 4px;
    margin: 2px 0 0 2px;
    border-left: 2px solid #777;
    border-bottom: 2px solid #777;
    transform: rotate(-45deg);
}

.group {
    display: flex;
    padding: 10px 3px 0 4px;
    border-right: 1px solid #c6c6c6;
}

.tool {
    min-width: 40px;
    padding: 0 4px;
    display: flex;
    flex-direction: column;
    align-items: center;
    gap: 6px;
}

.tool svg {
    width: 32px;
    height: 32px;
}

.with-arrow {
    display: flex;
    align-items: center;
    gap: 4px;
}

.tool .arrow {
    width: 8px;
    height: 8px;
}

/* workspace */
.workspace {
    flex: 1;
    min-height: 0;
    display: flex;
}

.sidebar {
    flex: none;
    width: 389px;
    display: flex;
    background: #fff;
    border: 1px solid #828790;
    overflow: hidden;
}

.tree {
    flex: 1;
    padding-left: 3px;
    font-family: "Liberation Mono", "Noto Sans CJK SC", monospace;
    font-size: 15px;
}

.tree li {
    position: relative;
    padding-left: 23px;
}

.tree li::before {
    content: "";
    position: absolute;
    left: 11px;
    top: 0;
    bottom: 0;
    border-left: 1px dotted #808080;
}

.tree li:last-child::before {
    bottom: auto;
    height: 18px;
}

.tree li.root::before, .tree li.more::before {
    top: 17px;
    bottom: 0;
    height: auto;
}

.tree li.more::before {
    top: 0;
}

.tree li::after {
    content: "";
    position: absolute;
    left: 12px;
    top: 17px;
    width: 12px;
    border-top: 1px dotted #808080;
}

.exp {
    position: absolute;
    z-index: 1;
    left: 7px;
    top: 13px;
    width: 9px;
    height: 9px;
    border: 1px solid #8f8f8f;
    border-radius: 1px;
    background: linear-gradient(#4b63a7, #4b63a7) center / 5px 1px no-repeat #fff;
}

.node {
    height: 30px;
    padding-top: 4px;
    display: flex;
    align-items: center;
    gap: 4px;
    white-space: nowrap;
}

.node svg {
    flex: none;
    width: 22px;
    height: 22px;
}

.node .pale {
    opacity: .6;
}

.scrollbar {
    flex: none;
    width: 16px;
    margin: 1px;
    background: var(--face);
}

.thumb {
    width: 2px;
    height: 80%;
    margin: 17px 0 0 7px;
    background: #858585;
}

/* documents */
.content {
    flex: 1;
    min-width: 0;
    display: flex;
    flex-direction: column;
}

.doc-tabs {
    flex: none;
    height: 25px;
    display: flex;
    align-items: flex-start;
    padding: 1px 0 0 13px;
    border-bottom: 2px solid #fff;
    border-left: 1px solid #fff;
}

.doc-tab {
    height: 19px;
    margin-top: 2px;
    padding-left: 11px;
    display: flex;
    align-items: center;
    background: #d4d4d4;
    border-right: 1px solid #6a6a6a;
    font-size: 13px;
    font-weight: bold;
    color: var(--blue);
}

.doc-tab + .doc-tab {
    margin-left: 2px;
    border-right-color: #d4d4d4;
}

.doc-tab button {
    width: 24px;
    font-size: 16px;
    line-height: 16px;
    color: #000;
}

.doc-tab.current {
    height: 22px;
    margin-top: 0;
    margin-left: 2px;
    padding: 0 0 0 9px;
    background: #fff;
    border-right: 2px solid #6a6a6a;
}

.doc-tab.current button {
    width: 34px;
}

.frame {
    flex: 1;
    min-height: 0;
    display: flex;
    flex-direction: column;
    margin: 1px 1px 1px 11px;
    padding: 0 2px 2px 1px;
    border: 1px solid #e3e3e3;
    border-top: 2px solid #777;
    border-left: 2px solid #777;
}

.tabs {
    flex: none;
    height: 20px;
    display: flex;
    align-items: flex-end;
}

.tab {
    height: 17px;
    padding: 0 4px;
    background: #f3f3f3;
    border: 1px solid #e3e3e3;
    border-bottom: none;
    line-height: 16px;
}

.tab.selected {
    height: 20px;
    padding: 0 7px 3px 5px;
    background: var(--page);
}

.page {
    flex: 1;
    min-height: 0;
    display: flex;
    flex-direction: column;
    background: var(--page);
    border: 1px solid #e3e3e3;
}

.outer {
    padding: 0 3px 3px 1px;
}

.inner {
    padding: 4px 4px 6px 6px;
}

.view-opts {
    flex: 1;
    align-self: center;
    display: flex;
    gap: 10px;
    padding-left: 41%;
}

.view-opts label {
    padding-right: 6px;
    background: var(--face);
    line-height: 18px;
}

.tick {
    appearance: none;
    flex: none;
    width: 13px;
    height: 13px;
    margin-right: 4px;
    background: var(--page);
    border: 1px solid #707070;
    border-radius: 3px;
}

.tick:checked {
    background: var(--tick);
    border-color: var(--tick);
}

.tick:checked::before {
    content: "";
    display: block;
    width: 7px;
    height: 4px;
    margin: 2px 0 0 2px;
    border-left: 1px solid #fff;
    border-bottom: 1px solid #fff;
    transform: rotate(-45deg);
}

/* 3d view */
.canvas {
    flex: 1;
    min-height: 0;
    position: relative;
    background: #f5f5f5;
    border: 1px solid #808080;
}

.scene {
    display: block;
    width: 100%;
    height: 100%;
}

.grid {
    fill: none;
    stroke: #7c7c7c;
}

.axis text {
    font-family: "Liberation Mono", monospace;
    font-size: 11px;
    paint-order: stroke;
    stroke: #fff;
    stroke-width: 3px;
}

.cube-text text {
    font-family: "Liberation Serif", serif;
    font-size: 6px;
    fill: #ddd;
}

.cube-text .narrow {
    font-size: 4px;
}

.compass text {
    font-family: "Liberation Serif", serif;
    font-size: 14px;
    font-style: italic;
}

.legend {
    position: absolute;
    left: 25px;
    top: 22px;
    font-family: "Liberation Mono", "Noto Sans CJK SC", monospace;
}

.legend h2 {
    margin: 0 0 0 3px;
    font-size: 18px;
    line-height: 22px;
    font-weight: 500;
}

.legend b {
    font-family: "Liberation Serif", serif;
    font-size: 14px;
}

.legend p {
    margin: 0 0 0 2px;
    font-size: 10px;
    line-height: 18px;
}

.scale {
    display: flex;
    margin-top: 35px;
}

.colors li {
    width: 9px;
    height: 30px;
    border-bottom: 1px solid #fff;
}

.values {
    margin: -8px 0 0 11px;
    font-size: 10px;
}

.values li {
    height: 30px;
    text-shadow: 0 0 1px #fff, 0 0 2px #fff;
}

.c1 { background: #ff0000; }
.c2 { background: #ff4000; }
.c3 { background: #ff8000; }
.c4 { background: #ffbf00; }
.c5 { background: #ffff00; }
.c6 { background: #bfff00; }
.c7 { background: #80ff00; }
.c8 { background: #40ff00; }
.c9 { background: #00ff00; }
.c10 { background: #00ff40; }
.c11 { background: #00ff80; }
.c12 { background: #00ffbf; }
.c13 { background: #00ffff; }
.c14 { background: #00bfff; }
.c15 { background: #0080ff; }
.c16 { background: #0040ff; }
.c17 { background: #0000ff; }

.view-tools {
    position: absolute;
    top: 9px;
    left: 0;
    right: 0;
    padding-right: 5px;
    display: flex;
    justify-content: center;
    gap: 13px;
}

.view-tools svg {
    display: block;
    width: 24px;
    height: 24px;
    fill: none;
    stroke: #000;
    stroke-width: 2;
}

.show-control {
    position: absolute;
    top: 1px;
    right: 5px;
    padding-right: 6px;
    background: #f8f8f8;
}

/* option panels */
.panels {
    flex: none;
    height: 128px;
    display: flex;
    font-family: "Liberation Mono", "Noto Sans CJK SC", monospace;
}

fieldset {
    flex: none;
    min-width: 0;
    margin: 0;
    padding: 0;
    border: 1px solid var(--line);
}

legend {
    margin-left: 5px;
    padding: 0 1px;
    line-height: 16px;
}

select {
    appearance: none;
    display: block;
    height: 20px;
    padding: 0 2px;
    border: 1px solid #bdbdbd;
    border-radius: 2px;
    background:
        linear-gradient(45deg, transparent 42%, #666 42%, #666 58%, transparent 58%) right 8px center / 5px 5px no-repeat,
        linear-gradient(-45deg, transparent 42%, #666 42%, #666 58%, transparent 58%) right 4px center / 5px 5px no-repeat,
        #fff;
}

/* the two strokes meet at the bottom of the arrow */
select {
    background-image:
        linear-gradient(45deg, transparent 42%, #666 42%, #666 58%, transparent 58%),
        linear-gradient(-45deg, transparent 42%, #666 42%, #666 58%, transparent 58%);
}

.btn {
    height: 20px;
    background: #fdfdfd;
    border: 1px solid #d0d0d0;
    border-bottom-color: #bbb;
    border-radius: 4px;
}

.btn.on {
    background: #cce4f7;
    border-color: #005499;
}

.p-type {
    width: 187px;
    margin-right: 7px;
}

.p-type select {
    width: 170px;
    margin: 3px 0 0 8px;
}

.checks {
    display: flex;
    gap: 13px;
    margin: 17px 0 19px 8px;
}

.p-type .btn {
    display: block;
    width: 82px;
    margin-left: 50px;
}

.p-ratio {
    width: 245px;
}

.slider {
    width: 235px;
    height: 30px;
    margin: 0 0 1px 3px;
    padding: 2px 7px 0;
    background: var(--face);
}

.slider input {
    appearance: none;
    display: block;
    width: 220px;
    height: 19px;
    background: none;
}

.slider input::-webkit-slider-runnable-track {
    height: 19px;
    background:
        linear-gradient(#e7eaea, #e7eaea) 0 7px / 100% 2px no-repeat,
        linear-gradient(#cfcfcf, #cfcfcf) 0 6px / 100% 4px no-repeat;
}

.slider input::-webkit-slider-thumb {
    appearance: none;
    width: 11px;
    height: 19px;
    background: var(--blue);
    clip-path: polygon(0 0, 100% 0, 100% 72%, 50% 100%, 0 72%);
}

.marks {
    display: flex;
    justify-content: space-between;
    width: 210px;
    margin: 1px 0 0 5px;
}

.marks i {
    width: 1px;
    height: 3px;
    background: #b8b8b8;
}

.check-grid {
    display: grid;
    grid-template-columns: 74px 87px auto;
    row-gap: 3px;
    margin: 7px 0 0 4px;
}

.p-view {
    width: 189px;
    height: 126px;
    margin-left: -1px;
}

.p-view > label {
    margin-left: 10px;
    line-height: 16px;
}

.p-view select {
    width: 164px;
    margin: 7px 0 0 9px;
    border-color: #7a7a7a;
}

.view-grid {
    display: grid;
    grid-template-columns: 76px 76px;
    gap: 14px 12px;
    margin: 9px 0 0 12px;
}

.view-grid label {
    padding-left: 4px;
}

.filler {
    margin-top: 8px;
    border: 1px solid var(--line);
    border-width: 1px 0;
}

.gap {
    width: 7px;
}

.p-save {
    width: 143px;
}

.p-save .btn {
    display: block;
    width: 100px;
    margin: 15px 0 0 18px;
}

.rest {
    flex: 1;
    border-right-width: 1px;
}

/* status */
.statusbar {
    flex: none;
    height: 26px;
    display: flex;
    align-items: center;
    justify-content: flex-end;
    padding-right: 6px;
    border-top: 1px solid #d5d5d5;
}

.hint {
    margin-right: 47px;
    color: #222;
}

.toggle {
    width: 20px;
    height: 20px;
    margin: 0 12px 0 13px;
}

.statusbar a {
    color: #0000ff;
}

/* strip of wallpaper under the window */
.desktop {
    flex: none;
    height: 8px;
    border-top: 1px solid #a5b39a;
    background:
        radial-gradient(circle at 354px 10px, #c0392b 5px, transparent 6px),
        radial-gradient(circle at 1232px 10px, #c0392b 5px, transparent 6px),
        linear-gradient(90deg, #cfe6bd, #d3ebc0 15%, #e4ec9c 27%, #eee98a 33%, #e9f08f 38%, #ece3a0 41%, #e2eda4 62%, #d8ebb0 76%, #d0e6c8 88%, #d8ecb2);
}
```
